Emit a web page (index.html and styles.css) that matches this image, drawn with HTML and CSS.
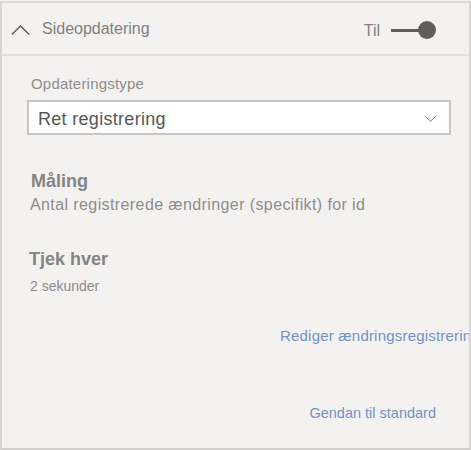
FILE: index.html
```html
<!DOCTYPE html>
<html lang="da">
<head>
<meta charset="utf-8">
<title>Sideopdatering</title>
<link rel="stylesheet" href="styles.css">
</head>
<body>
<div class="panel">
  <div class="header">
    <svg class="chev-up" width="19" height="10" viewBox="0 0 19 10" aria-hidden="true">
      <polyline points="0.8,9.4 9.5,0.9 18.2,9.4" fill="none" stroke="#5a5a5a" stroke-width="1.4"/>
    </svg>
    <span class="title">Sideopdatering</span>
    <div class="toggle-wrap">
      <span class="toggle-label">Til</span>
      <span class="toggle"><span class="track"></span><span class="knob"></span></span>
    </div>
  </div>
  <div class="content">
    <div class="label">Opdateringstype</div>
    <div class="dropdown">
      <span class="dropdown-text">Ret registrering</span>
      <svg class="chev-down" width="11" height="6" viewBox="0 0 11 6" aria-hidden="true">
        <polyline points="0.5,0.5 5.5,5.3 10.5,0.5" fill="none" stroke="#7a7a7a" stroke-width="1"/>
      </svg>
    </div>
    <div class="section-title measure">Måling</div>
    <div class="section-text">Antal registrerede ændringer (specifikt) for id</div>
    <div class="section-title check">Tjek hver</div>
    <div class="section-small">2 sekunder</div>
    <div class="link edit">Rediger ændringsregistrering</div>
    <div class="link reset">Gendan til standard</div>
  </div>
</div>
</body>
</html>
```

FILE: styles.css
```css
html, body {
  margin: 0;
  padding: 0;
  background: #f3f2f1;
}

body {
  font-family: "Liberation Sans", Arial, sans-serif;
}

.panel {
  box-sizing: border-box;
  width: 471px;
  height: 449px;
  margin-top: 1px;
  border-left: 2px solid #d6d5d4;
  border-right: 2px solid #d6d5d4;
  border-bottom: 2px solid #d0cfce;
  overflow: hidden;
  background: #f3f2f1;
}

.header {
  box-sizing: border-box;
  height: 55px;
  border-top: 2px solid #dcdbda;
  border-bottom: 2px solid #e0dfde;
  padding: 3px 33px 0 9px;
  display: flex;
  align-items: center;
}

.chev-up {
  display: block;
  flex: none;
}

.title {
  margin-left: 12px;
  margin-bottom: 2px;
  font-size: 16px;
  color: #81807f;
}

.toggle-wrap {
  margin-left: auto;
  display: flex;
  align-items: center;
}

.toggle-label {
  font-size: 16px;
  color: #81807f;
  margin-top: 2px;
}

.toggle {
  margin-left: 11px;
  display: flex;
  align-items: center;
}

.track {
  width: 30px;
  height: 3px;
  background: #605e5c;
}

.knob {
  width: 18px;
  height: 18px;
  border-radius: 50%;
  background: #605e5c;
  margin-left: -3px;
}

.content {
  padding: 18px 18px 0 25px;
}

.label {
  margin-left: 4px;
  font-size: 15px;
  line-height: 20px;
  letter-spacing: 0.2px;
  color: #8e8c8a;
}

.dropdown {
  box-sizing: border-box;
  margin-top: 6px;
  height: 35px;
  border: 2px solid #c8c6c4;
  background: #ffffff;
  display: flex;
  align-items: center;
  padding: 3px 13px 0 9px;
}

.dropdown-text {
  font-size: 18px;
  letter-spacing: 0.3px;
  color: #575655;
}

.chev-down {
  display: block;
  margin-left: auto;
}

.section-title {
  font-size: 18px;
  font-weight: bold;
  line-height: 22px;
  color: #858483;
}

.measure {
  margin-top: 35px;
  margin-left: 4px;
}

.check {
  margin-top: 33px;
  margin-left: 2px;
}

.section-text {
  margin-top: 3px;
  margin-left: 3px;
  font-size: 16px;
  letter-spacing: 0.4px;
  line-height: 20px;
  color: #8e8c8a;
}

.section-small {
  margin-top: 7px;
  margin-left: 3px;
  font-size: 14px;
  line-height: 18px;
  color: #8e8c8a;
}

.link {
  color: #7391c4;
  white-space: nowrap;
  line-height: 20px;
}

.edit {
  margin-top: 31px;
  margin-left: 253px;
  font-size: 15px;
  letter-spacing: 0.2px;
}

.reset {
  margin-top: 57px;
  font-size: 14.5px;
  text-align: right;
  padding-right: 15px;
}
```
